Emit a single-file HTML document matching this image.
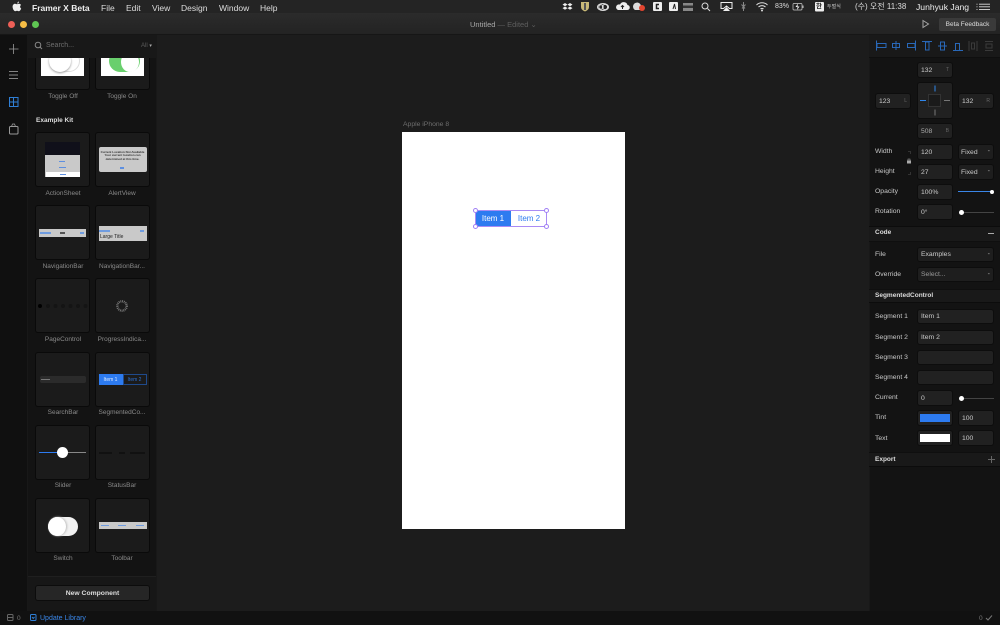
<!DOCTYPE html>
<html><head><meta charset="utf-8"><style>
*{box-sizing:border-box}
html,body{margin:0;padding:0;width:1000px;height:625px;overflow:hidden;background:#1c1c1c;font-family:"Liberation Sans","Noto Sans CJK KR",sans-serif}
#p{position:absolute;left:0;top:0;width:1000px;height:625px;overflow:hidden;filter:blur(.3px)}
.a,.t,.c,.i,.l,.m{position:absolute}
.t{white-space:nowrap;line-height:10px}
.m{top:2px;font-size:8.5px;line-height:10px;color:#ddd;white-space:nowrap}
.c{width:53px;height:53px;background:#1b1b1b;border-radius:2px;box-shadow:0 0 0 1px #0a0a0a}
.l{width:60px;text-align:center;font-size:6.5px;line-height:10px;color:#8a8a8a;white-space:nowrap}
.i{background:#212121;border-radius:2px;box-shadow:0 0 0 1px #0d0d0d;font-size:6.8px;line-height:15px;color:#ccc;padding-left:3px;height:14px;white-space:nowrap}
.n{position:absolute;left:875px;font-size:6.8px;line-height:10px;color:#c8c8c8;white-space:nowrap}
.h{position:absolute;left:875px;font-size:6.5px;line-height:10px;color:#ddd;font-weight:bold;white-space:nowrap}
.s{position:absolute;right:3px;top:0;font-size:5px;color:#666;line-height:14px}
.d{position:absolute;right:3px;top:0;font-size:7px;color:#aaa;line-height:13px}
</style></head><body><div id="p">

<!-- menubar -->
<div class="a" style="left:0;top:0;width:1000px;height:13px;background:#242424"></div>
<svg class="a" style="left:12px;top:1px" width="10" height="11" viewBox="0 0 10 11"><path d="M7 .5C6 .7 5.200 1.500 5.200 2.600 6.300 2.600 7 1.600 7 .5ZM5 3.200C4.300 3.200 3.800 2.800 3 2.800 1.700 2.800.6 4 .6 5.800.6 7.800 2 10.200 3.100 10.200 3.800 10.200 4.200 9.700 5 9.700S6.200 10.200 6.900 10.200C7.900 10.200 8.800 8.600 9.200 7.500 8.100 7 7.600 5 9 4 8.500 3.200 7.600 2.800 6.900 2.800 6.200 2.800 5.600 3.200 5 3.200Z" fill="#eee"/></svg>
<div class="m" style="left:32px;font-weight:bold;color:#eee;font-size:8.5px;top:2.500px">Framer X Beta</div>
<div class="m" style="left:101px;top:2.500px">File</div>
<div class="m" style="left:126px;top:2.500px">Edit</div>
<div class="m" style="left:152px;top:2.500px">View</div>
<div class="m" style="left:181px;top:2.500px">Design</div>
<div class="m" style="left:219px;top:2.500px">Window</div>
<div class="m" style="left:260px;top:2.500px">Help</div>

<!-- menubar right icons -->
<svg class="a" style="left:560px;top:0" width="320" height="13" viewBox="560 0 320 13">
<path d="M565 3l2.500 1.600L565 6.200l-2.500-1.600zM570 3l2.500 1.600L570 6.200l-2.500-1.600zM565 6.500l2.500 1.600L565 9.700l-2.500-1.600zM570 6.500l2.500 1.600L570 9.700l-2.500-1.600z" fill="#eee"/>
<path d="M581 2h8v5q0 3-4 4.500Q581 10 581 7z" fill="#c9b978"/><rect x="584" y="3" width="2" height="7" fill="#555"/>
<ellipse cx="603" cy="7" rx="5.500" ry="3.500" fill="none" stroke="#ddd"/><circle cx="605" cy="7" r="2.600" fill="none" stroke="#ddd"/><circle cx="601" cy="7" r="2.200" fill="none" stroke="#ddd"/>
<path d="M618 10h9a2.500 2.500 0 0 0 .5-5A4 4 0 0 0 620 4.500 2.800 2.800 0 0 0 618 10z" fill="#eee"/><path d="M622.500 9V5.500M621 7l1.500-1.500L624 7" stroke="#222" fill="none"/>
<path d="M635 10a4 4 0 1 1 6-4l-1 4z" fill="#ddd"/><circle cx="642" cy="8" r="3" fill="#e2452f"/>
<rect x="653" y="2" width="9" height="9" rx="1" fill="#eee"/><path d="M659 4.500H656.500V8.500H659" stroke="#222" fill="none" stroke-width="1.500"/>
<rect x="669" y="2" width="9" height="9" rx="1" fill="#eee"/><path d="M673 9l1.500-5 1 5" stroke="#222" fill="none"/>
<rect x="683" y="3" width="10" height="8" fill="#888"/><rect x="683" y="5.500" width="10" height="2.500" fill="#333"/>
<circle cx="705" cy="6" r="3" fill="none" stroke="#ddd"/><path d="M707.500 8.500l2.500 2.500" stroke="#ddd"/>
<path d="M721 2.500h11v6h-2.500l-3-2.500-3 2.500H721z" fill="none" stroke="#eee"/><path d="M726.500 7l3.500 4h-7z" fill="#eee"/>
<path d="M743.500 2v9M741.500 4.500l3.500 4M745.500 4.500l-3.500 4" stroke="#888" fill="none"/>
<path d="M756.500 5a8 8 0 0 1 11 0M758.500 7a5 5 0 0 1 7 0M760.500 9a2.200 2.200 0 0 1 3 0" stroke="#ddd" fill="none"/><circle cx="762" cy="10.500" r="1" fill="#ddd"/>
<rect x="793" y="3.500" width="9" height="6.500" rx="1" fill="none" stroke="#ccc" stroke-width=".7"/><path d="M798 3.500l-2.500 3.500h2l-.5 3 2.500-3.500h-2z" fill="#eee"/><rect x="802.500" y="5.500" width="1" height="2.500" fill="#ccc"/>
<rect x="815" y="2" width="9" height="9.500" rx="1" fill="#eee"/>
</svg>
<div class="m" style="left:775px;font-size:7px;top:2px;color:#ddd">83%</div>
<div class="m" style="left:816px;top:2px;font-size:6.500px;color:#222;font-weight:bold">한</div>
<div class="m" style="left:827px;font-size:5px;color:#ccc;top:2px">두벌식</div>
<div class="m" style="left:855px;top:2px;font-size:8px">(수) 오전 11:38</div>
<div class="m" style="left:916px;font-size:8.600px;color:#eee;top:2px">Junhyuk Jang</div>
<svg class="a" style="left:975px;top:3px" width="16" height="8" viewBox="0 0 16 8"><path d="M4 1.200h11M4 3.800h11M4 6.400h11M1.500 1.200h1M1.500 3.800h1M1.500 6.400h1" stroke="#ddd" stroke-width=".9"/></svg>

<!-- titlebar -->
<div class="a" style="left:0;top:13px;width:1000px;height:22px;background:linear-gradient(#2b2b2b,#232323);border-bottom:1px solid #161616"></div>
<div class="a" style="left:8px;top:21px;width:7px;height:7px;border-radius:50%;background:#ee5f57"></div>
<div class="a" style="left:20px;top:21px;width:7px;height:7px;border-radius:50%;background:#f6bd45"></div>
<div class="a" style="left:32px;top:21px;width:7px;height:7px;border-radius:50%;background:#5fc653"></div>
<div class="t" style="left:470px;top:19.500px;font-size:7.500px;color:#a8a8a8">Untitled <span style="color:#5e5e5e">— Edited ⌄</span></div>
<svg class="a" style="left:921px;top:19px" width="9" height="10" viewBox="0 0 9 10"><path d="M2 1.500l5.500 3.500L2 8.500z" fill="none" stroke="#a5a5a5"/></svg>
<div class="t" style="left:939px;top:18px;width:57px;height:13px;line-height:13px;background:#3a3a3a;border-radius:2px;font-size:6.500px;text-align:center;color:#ddd">Beta Feedback</div>

<!-- left rail -->
<div class="a" style="left:0;top:35px;width:27px;height:576px;background:#101010"></div>
<svg class="a" style="left:0;top:35px" width="27" height="110" viewBox="0 35 27 110">
<path d="M13.500 44v10M9 49h9.500" stroke="#999" stroke-width=".8" fill="none"/>
<path d="M9 71.500h9M9 75h9M9 78.500h9" stroke="#aaa" stroke-width=".8" fill="none"/>
<rect x="9.500" y="97.500" width="8.500" height="9" fill="none" stroke="#2f7fd6"/><path d="M13.500 98v8M10 102h8" stroke="#2f7fd6"/>
<rect x="9.500" y="126.500" width="8.500" height="7.500" rx="1" fill="none" stroke="#999"/><path d="M11.500 126.500l1-2.500h2l1 2.500" fill="none" stroke="#999" stroke-width=".8"/>
</svg>

<!-- left panel -->
<div class="a" style="left:27px;top:35px;width:130px;height:576px;background:#131313;border-left:1px solid #181818;border-right:1px solid #181818;overflow:hidden">
</div>
<div class="a" style="left:36px;top:50px;width:53px;height:39px;background:#1b1b1b;border-radius:2px;box-shadow:0 0 0 1px #0a0a0a"></div>
<div class="a" style="left:41px;top:50px;width:43px;height:26px;background:#fff"></div>
<div class="a" style="left:49px;top:50px;width:31px;height:22px;border-radius:11px;border:1px solid #ddd;background:#fff"></div>
<div class="a" style="left:49px;top:50px;width:22px;height:22px;border-radius:50%;background:#fff;box-shadow:0 1px 2px #999"></div>
<div class="a" style="left:96px;top:50px;width:53px;height:39px;background:#1b1b1b;border-radius:2px;box-shadow:0 0 0 1px #0a0a0a"></div>
<div class="a" style="left:101px;top:50px;width:43px;height:26px;background:#fff"></div>
<div class="a" style="left:109px;top:50px;width:31px;height:22px;border-radius:11px;background:#69cf6d"></div>
<div class="a" style="left:121px;top:52px;width:18px;height:20px;border-radius:50%;background:#fff"></div>

<!-- search header -->
<div class="a" style="left:28px;top:35px;width:128px;height:23px;background:#181818"></div>
<svg class="a" style="left:34px;top:41px" width="9" height="9" viewBox="0 0 9 9"><circle cx="4" cy="4" r="2.800" fill="none" stroke="#888"/><path d="M6 6l2 2" stroke="#888"/></svg>
<div class="t" style="left:46px;top:41px;font-size:7px;color:#6e6e6e">Search...</div>
<div class="t" style="left:141px;top:41px;font-size:6px;color:#5c5c5c">All <span style="color:#aaa;font-size:5px">▾</span></div>

<div class="l" style="left:33px;top:92px">Toggle Off</div>
<div class="l" style="left:92px;top:92px">Toggle On</div>
<div class="t" style="left:36px;top:115.500px;font-size:6.500px;font-weight:bold;color:#ddd">Example Kit</div>

<!-- row 1 -->
<div class="c" style="left:36px;top:133px"></div>
<div class="a" style="left:45px;top:142px;width:35px;height:13px;background:#10101a"></div>
<div class="a" style="left:45px;top:155px;width:35px;height:22px;background:#c9c9c9"></div>
<div class="a" style="left:46px;top:172px;width:34px;height:5px;background:#fff"></div>
<div class="a" style="left:59px;top:161px;width:6px;height:1px;background:#5d8fe0"></div>
<div class="a" style="left:59px;top:167px;width:7px;height:1px;background:#5d8fe0"></div>
<div class="a" style="left:60px;top:174px;width:6px;height:1px;background:#5d8fe0"></div>
<div class="c" style="left:96px;top:133px"></div>
<div class="a" style="left:98.500px;top:147px;width:48px;height:25px;background:#c9c9c9;border-radius:2px"></div>
<div class="t" style="left:98.500px;top:151px;width:48px;text-align:center;font-size:3px;line-height:3.300px;color:#333;font-weight:bold">Current Location Not Available<br>Your current location can<br>determined at this time.</div>
<div class="a" style="left:120px;top:167px;width:4px;height:2px;background:#5d8fe0"></div>
<div class="l" style="left:33px;top:189px">ActionSheet</div>
<div class="l" style="left:92px;top:189px">AlertView</div>

<!-- row 2 -->
<div class="c" style="left:36px;top:206px"></div>
<div class="a" style="left:39px;top:229px;width:47px;height:8px;background:#c9c9c9"></div>
<div class="a" style="left:40px;top:232px;width:11px;height:2px;background:#6f9ce0"></div>
<div class="a" style="left:60px;top:232px;width:5px;height:2px;background:#555"></div>
<div class="a" style="left:80px;top:232px;width:4px;height:2px;background:#6f9ce0"></div>
<div class="c" style="left:96px;top:206px"></div>
<div class="a" style="left:98.500px;top:226px;width:48px;height:15px;background:#c9c9c9"></div>
<div class="a" style="left:99px;top:230px;width:11px;height:2px;background:#6f9ce0"></div>
<div class="a" style="left:140px;top:230px;width:4px;height:2px;background:#6f9ce0"></div>
<div class="t" style="left:100px;top:233px;font-size:5px;line-height:8px;color:#222">Large Title</div>
<div class="l" style="left:33px;top:262px">NavigationBar</div>
<div class="l" style="left:92px;top:262px">NavigationBar...</div>

<!-- row 3 -->
<div class="c" style="left:36px;top:279px"></div>
<svg class="a" style="left:36px;top:300px" width="53" height="12"><circle cx="4" cy="6" r="2" fill="#000"/><g fill="#141414"><circle cx="12" cy="6" r="2"/><circle cx="19.500" cy="6" r="2"/><circle cx="27" cy="6" r="2"/><circle cx="34.500" cy="6" r="2"/><circle cx="42" cy="6" r="2"/><circle cx="49.500" cy="6" r="2"/></g></svg>
<div class="c" style="left:96px;top:279px"></div>
<svg class="a" style="left:116px;top:300px" width="12" height="12" viewBox="0 0 12 12"><circle cx="6" cy="6" r="4.700" fill="none" stroke="#7a7a7a" stroke-width="2.300" stroke-dasharray=".9 .8"/></svg>
<div class="l" style="left:33px;top:335px">PageControl</div>
<div class="l" style="left:92px;top:335px">ProgressIndica...</div>

<!-- row 4 -->
<div class="c" style="left:36px;top:353px"></div>
<div class="a" style="left:40px;top:376px;width:46px;height:7px;background:#2b2b2b;border-radius:2px"></div>
<div class="a" style="left:41px;top:379px;width:9px;height:1px;background:#777"></div>
<div class="c" style="left:96px;top:353px"></div>
<div class="a" style="left:98.500px;top:374px;width:24px;height:11px;background:#2d7bf0"></div>
<div class="a" style="left:122.500px;top:374px;width:24px;height:11px;border:1px solid #1f4a8c"></div>
<div class="t" style="left:98.500px;top:374.500px;width:24px;text-align:center;font-size:5px;color:#dce9ff">Item 1</div>
<div class="t" style="left:122.500px;top:374.500px;width:24px;text-align:center;font-size:5px;color:#2d6fd0">Item 2</div>
<div class="l" style="left:33px;top:408px">SearchBar</div>
<div class="l" style="left:92px;top:408px">SegmentedCo...</div>

<!-- row 5 -->
<div class="c" style="left:36px;top:426px"></div>
<div class="a" style="left:39px;top:452px;width:24px;height:1px;background:#2d7bf0"></div>
<div class="a" style="left:62px;top:452px;width:24px;height:1px;background:#888"></div>
<div class="a" style="left:57px;top:447px;width:11px;height:11px;border-radius:50%;background:#fff"></div>
<div class="c" style="left:96px;top:426px"></div>
<div class="a" style="left:99px;top:452px;width:13px;height:1.500px;background:#111"></div>
<div class="a" style="left:119px;top:452px;width:6px;height:1.500px;background:#111"></div>
<div class="a" style="left:130px;top:452px;width:15px;height:1.500px;background:#111"></div>
<div class="l" style="left:33px;top:481px">Slider</div>
<div class="l" style="left:92px;top:481px">StatusBar</div>

<!-- row 6 -->
<div class="c" style="left:36px;top:499px"></div>
<div class="a" style="left:48px;top:517px;width:30px;height:19px;border-radius:10px;background:#f2f2f2"></div>
<div class="a" style="left:48px;top:517px;width:18px;height:19px;border-radius:50%;background:#fff;box-shadow:1px 0 2px #bbb"></div>
<div class="c" style="left:96px;top:499px"></div>
<div class="a" style="left:98.500px;top:522px;width:48px;height:7px;background:#c9c9c9"></div>
<div class="a" style="left:101px;top:525px;width:8px;height:1px;background:#6f9ce0"></div>
<div class="a" style="left:118px;top:525px;width:8px;height:1px;background:#6f9ce0"></div>
<div class="a" style="left:136px;top:525px;width:8px;height:1px;background:#6f9ce0"></div>
<div class="l" style="left:33px;top:554px">Switch</div>
<div class="l" style="left:92px;top:554px">Toolbar</div>

<!-- new component -->
<div class="a" style="left:28px;top:576px;width:128px;height:35px;background:#171717;border-top:1px solid #1f1f1f"></div>
<div class="t" style="left:36px;top:586px;width:113px;height:14px;line-height:15px;background:#262626;border-radius:2px;box-shadow:0 0 0 1px #0c0c0c;text-align:center;font-size:6.800px;font-weight:bold;color:#ddd">New Component</div>

<!-- bottom bar -->
<div class="a" style="left:0;top:611px;width:1000px;height:14px;background:#111"></div>
<svg class="a" style="left:6px;top:613px" width="10" height="10" viewBox="0 0 10 10"><rect x="1.500" y="1.500" width="5.500" height="6" rx="1" fill="none" stroke="#666"/><path d="M1.500 4.500h5.500" stroke="#666"/></svg>
<div class="t" style="left:17px;top:613.500px;font-size:6.500px;color:#777">0</div>
<svg class="a" style="left:29px;top:613px" width="10" height="10" viewBox="0 0 10 10"><rect x="1.500" y="1.500" width="5.500" height="6" rx="1" fill="none" stroke="#2f7fd6"/><path d="M3 4l1.200 1.500L5.500 4" stroke="#2f7fd6" fill="none"/></svg>
<div class="t" style="left:40px;top:613.500px;font-size:7px;color:#3a86e8">Update Library</div>
<div class="t" style="left:979px;top:613.500px;font-size:6.500px;color:#777">0</div>
<svg class="a" style="left:985px;top:614px" width="9" height="8" viewBox="0 0 9 8"><path d="M1 4l2 2 4-4.500" stroke="#777" fill="none"/></svg>

<!-- canvas -->
<div class="t" style="left:403px;top:119.500px;font-size:6.800px;color:#6e6e6e">Apple iPhone 8</div>
<div class="a" style="left:402px;top:132px;width:223px;height:397px;background:#fff"></div>
<div class="a" style="left:475px;top:210px;width:36px;height:17px;background:#2d7bf0"></div>
<div class="a" style="left:475px;top:210px;width:72px;height:17px;border:1px solid #a98cf5"></div>
<div class="t" style="left:475px;top:214px;width:36px;text-align:center;font-size:8px;color:#fff">Item 1</div>
<div class="t" style="left:511px;top:214px;width:36px;text-align:center;font-size:8px;color:#2d7bf0">Item 2</div>
<div class="a" style="left:473px;top:208px;width:5px;height:5px;border-radius:50%;background:#fff;border:1px solid #a07ff5"></div>
<div class="a" style="left:544px;top:208px;width:5px;height:5px;border-radius:50%;background:#fff;border:1px solid #a07ff5"></div>
<div class="a" style="left:473px;top:224px;width:5px;height:5px;border-radius:50%;background:#fff;border:1px solid #a07ff5"></div>
<div class="a" style="left:544px;top:224px;width:5px;height:5px;border-radius:50%;background:#fff;border:1px solid #a07ff5"></div>

<!-- right panel -->
<div class="a" style="left:869px;top:35px;width:131px;height:576px;background:#131313;border-left:1px solid #181818"></div>
<div class="a" style="left:869px;top:35px;width:131px;height:23px;background:#191919;border-bottom:1px solid #0f0f0f"></div>
<svg class="a" style="left:870px;top:36px" width="130" height="20" viewBox="870 36 130 20">
<g stroke="#2968b8" fill="none">
<path d="M876.500 40.500v10M877 43.500h9v4h-9z"/>
<path d="M896 41v9M892.500 43.500h7v4h-7z"/>
<path d="M915.500 40.500v10M907.500 43.500h7.500v4h-7.500z"/>
<path d="M922 41.500h10M925.500 42h3.500v8h-3.500z"/>
<path d="M938 46h9M940.500 42h4v8h-4z"/>
<path d="M953 50.500h10M955.500 43.500h4v7h-4z"/>
</g>
<g stroke="#3a3a3a" fill="none">
<path d="M969 41v10M977 41v10M971.500 43h3v6h-3z"/>
<path d="M985 41.500h8M985 50.500h8M986 44h6v4h-6z"/>
</g></svg>

<div class="i" style="left:918px;top:63px;width:34px">132<span class="s">T</span></div>
<div class="a" style="left:918px;top:83px;width:34px;height:35px;background:#212121;border-radius:2px;box-shadow:0 0 0 1px #0d0d0d"></div>
<svg class="a" style="left:918px;top:83px" width="34" height="35" viewBox="0 0 34 35"><rect x="10.500" y="11.500" width="12" height="12" fill="#1a1a1a" stroke="#333"/><path d="M17 2.500v6" stroke="#2f86ea"/><path d="M2 17.500h6" stroke="#2f86ea"/><path d="M17 26.500v6M26 17.500h6" stroke="#777"/></svg>
<div class="i" style="left:876px;top:94px;width:34px">123<span class="s">L</span></div>
<div class="i" style="left:959px;top:94px;width:34px">132<span class="s">R</span></div>
<div class="i" style="left:918px;top:124px;width:34px;color:#aaa">508<span class="s">B</span></div>

<div class="n" style="top:147px">Width</div>
<div class="n" style="top:167px">Height</div>
<div class="n" style="top:187px">Opacity</div>
<div class="n" style="top:207px">Rotation</div>
<svg class="a" style="left:905px;top:150px" width="10" height="26" viewBox="0 0 10 26"><path d="M3 1.500h2.500V4M3 24.500h2.500V22" stroke="#333" fill="none"/><rect x="2" y="10.500" width="4" height="3" fill="#aaa"/><path d="M3 10.500V9h2v1.500" stroke="#aaa" fill="none" stroke-width=".6"/></svg>
<div class="i" style="left:918px;top:145px;width:34px">120</div>
<div class="i" style="left:959px;top:145px;width:34px;background:#1e1e1e;padding-left:2px">Fixed<span class="d">-</span></div>
<div class="i" style="left:918px;top:165px;width:34px">27</div>
<div class="i" style="left:959px;top:165px;width:34px;background:#1e1e1e;padding-left:2px">Fixed<span class="d">-</span></div>
<div class="i" style="left:918px;top:185px;width:34px">100%</div>
<div class="a" style="left:958px;top:191px;width:34px;height:1px;background:#3a86e8"></div>
<div class="a" style="left:990px;top:190px;width:4px;height:4px;border-radius:50%;background:#fff"></div>
<div class="i" style="left:918px;top:205px;width:34px">0°</div>
<div class="a" style="left:960px;top:212px;width:34px;height:1px;background:#444"></div>
<div class="a" style="left:959px;top:210px;width:5px;height:5px;border-radius:50%;background:#fff"></div>

<!-- code section -->
<div class="a" style="left:869px;top:226px;width:131px;height:16px;background:#191919;border-top:1px solid #0c0c0c;border-bottom:1px solid #0f0f0f"></div>
<div class="h" style="top:228px">Code</div>
<div class="a" style="left:988px;top:233px;width:6px;height:1px;background:#aaa"></div>
<div class="n" style="top:250px">File</div>
<div class="i" style="left:918px;top:248px;width:75px;line-height:14px;height:13px;padding-left:3px;background:#1e1e1e">Examples<span class="d">-</span></div>
<div class="n" style="top:270px">Override</div>
<div class="i" style="left:918px;top:268px;width:75px;line-height:14px;height:13px;padding-left:3px;background:#1e1e1e;color:#999">Select...<span class="d">-</span></div>

<div class="a" style="left:869px;top:289px;width:131px;height:14px;background:#191919;border-top:1px solid #0f0f0f;border-bottom:1px solid #0c0c0c"></div>
<div class="h" style="top:291px">SegmentedControl</div>
<div class="n" style="top:312px">Segment 1</div>
<div class="i" style="left:918px;top:310px;width:75px;height:13px;line-height:14px">Item 1</div>
<div class="n" style="top:333px">Segment 2</div>
<div class="i" style="left:918px;top:331px;width:75px;height:13px;line-height:14px">Item 2</div>
<div class="n" style="top:353px">Segment 3</div>
<div class="i" style="left:918px;top:351px;width:75px;height:13px"></div>
<div class="n" style="top:373px">Segment 4</div>
<div class="i" style="left:918px;top:371px;width:75px;height:13px"></div>
<div class="n" style="top:393px">Current</div>
<div class="i" style="left:918px;top:391px;width:34px">0</div>
<div class="a" style="left:960px;top:398px;width:34px;height:1px;background:#444"></div>
<div class="a" style="left:959px;top:396px;width:5px;height:5px;border-radius:50%;background:#fff"></div>
<div class="n" style="top:413px">Tint</div>
<div class="i" style="left:918px;top:411px;width:34px;padding:0"></div>
<div class="a" style="left:920px;top:414px;width:30px;height:8px;background:#2d7bf0"></div>
<div class="i" style="left:959px;top:411px;width:34px">100</div>
<div class="n" style="top:434px">Text</div>
<div class="i" style="left:918px;top:431px;width:34px;padding:0"></div>
<div class="a" style="left:920px;top:434px;width:30px;height:8px;background:#fff"></div>
<div class="i" style="left:959px;top:431px;width:34px">100</div>

<div class="a" style="left:869px;top:452px;width:131px;height:15px;background:#191919;border-top:1px solid #0f0f0f;border-bottom:1px solid #0c0c0c"></div>
<div class="h" style="top:454.500px">Export</div>
<svg class="a" style="left:988px;top:456px" width="7" height="7"><path d="M3.500 0v7M0 3.500h7" stroke="#666"/></svg>
</div></body></html>
